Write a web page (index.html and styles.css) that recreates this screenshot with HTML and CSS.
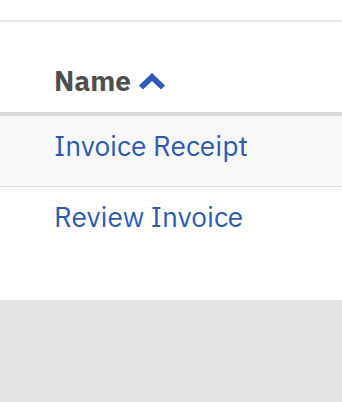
FILE: index.html
```html
<!DOCTYPE html>
<html lang="en">
<head>
  <meta charset="UTF-8" />
  <meta name="viewport" content="width=device-width, initial-scale=1.0" />
  <title>Documents</title>
  <link rel="stylesheet" href="styles.css">
</head>
<body>
  <div class="panel">
    <div class="panel-top"></div>
    <table class="doc-table">
      <thead>
        <tr>
          <th>
            <span class="sort-label">Name</span>
            <svg class="sort-icon" width="26" height="17" viewBox="0 0 26 17" aria-hidden="true">
              <polygon points="13,0 26,12.5 22,16.5 13,8 4,16.5 0,12.5" fill="#2b5bb7" />
            </svg>
          </th>
        </tr>
      </thead>
      <tbody>
        <tr class="striped"><td><a href="#">Invoice Receipt</a></td></tr>
        <tr><td><a href="#">Review Invoice</a></td></tr>
      </tbody>
    </table>
  </div>
</body>
</html>
```

FILE: styles.css
```css
body {
  margin: 0;
  background-color: #e3e3e3;
  font-family: "IBM Plex Sans", "Open Sans", "Noto Sans", sans-serif;
}
.panel {
  background: #fff;
  box-shadow: 0 3px 10px rgba(0, 0, 0, 0.3);
  padding-bottom: 43px;
}
.panel-top {
  height: 20px;
  border-bottom: 2px solid #e4e4e4;
}
.doc-table {
  width: 100%;
  border-collapse: collapse;
}
.doc-table th {
  text-align: left;
  height: 92px;
  padding: 0 0 13px 54px;
  vertical-align: bottom;
  border-bottom: 4px solid #d9d9d9;
  box-sizing: border-box;
}
.sort-label {
  font-size: 28px;
  font-weight: 700;
  color: #4f4f4f;
  line-height: 36px;
}
.sort-icon {
  margin-left: 4px;
  vertical-align: 1px;
}
.doc-table td {
  padding: 12px 0 22px 54px;
  font-size: 28px;
  line-height: 36px;
  border-bottom: 1px solid #dcdcdc;
}
.doc-table tbody tr:last-child td {
  border-bottom: none;
}
.striped {
  background-color: #f8f8f8;
}
.doc-table a {
  color: #2b5bb7;
  text-decoration: none;
}
```
